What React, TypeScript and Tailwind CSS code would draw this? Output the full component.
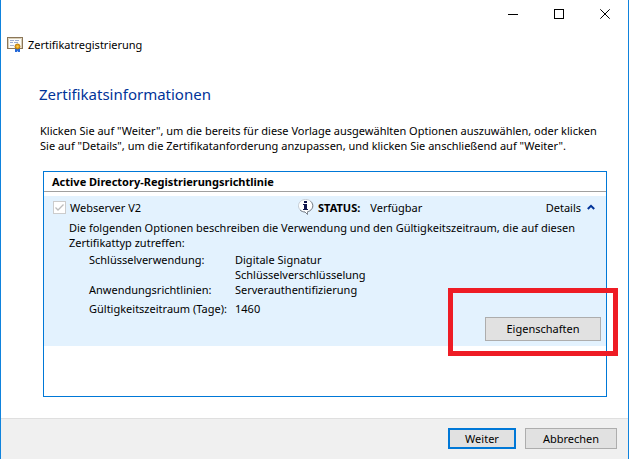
import { useState } from "react";
import type { ReactNode } from "react";

interface TemplateOption {
  label: string;
  values: string[];
}

const templateOptions: TemplateOption[] = [
  {
    label: "Schlüsselverwendung:",
    values: ["Digitale Signatur", "Schlüsselverschlüsselung"],
  },
  { label: "Anwendungsrichtlinien:", values: ["Serverauthentifizierung"] },
  { label: "Gültigkeitszeitraum (Tage):", values: ["1460"] },
];

function CertificateIcon() {
  return (
    <svg width="16" height="16" viewBox="0 0 16 16" aria-hidden="true">
      <rect x="0.5" y="1.5" width="15" height="11" fill="#fdfcf8" stroke="#8b7658" />
      <path d="M1.5 12V2.5H14.5V12" fill="none" stroke="#d9cfb8" />
      <path d="M3 4.5H7M8 4.5H12M3 6.5H6M7 6.5H11" stroke="#9dabcf" />
      <path d="M3 9.5H7" stroke="#a9b5d2" />
      <path d="M8 11.5V16H10L10.5 14.5L11 16H13V11.5Z" fill="#2468d8" />
      <circle cx="10.5" cy="10.5" r="2.5" fill="#e6a117" stroke="#b97909" />
      <circle cx="10.5" cy="10.5" r="1" fill="#f7cf56" />
    </svg>
  );
}

function InfoIcon() {
  return (
    <svg width="16" height="16" viewBox="0 0 16 16" aria-hidden="true">
      <path
        d="M7.5 0.5C3.6 0.5 0.5 3.2 0.5 6.8C0.5 10.2 3.4 12.8 7 13L9.5 15.5V12.8C13.4 11.8 15 9.5 15 6.8C15 3.2 11.7 0.5 7.5 0.5Z"
        fill="#fff"
        stroke="#c3cbd3"
      />
      <path
        d="M12.5 2.3C16.2 5.2 15.4 11.2 9.5 12.8V15.5L7 13C5 13 3.2 12.2 2 11"
        fill="none"
        stroke="#7d858e"
      />
      <rect x="6" y="2" width="3" height="2" fill="#11174d" />
      <path d="M5 5H9V10H10V11H5V10H6V6H5Z" fill="#11174d" />
    </svg>
  );
}

// 标题栏按钮
function CaptionButton({ label, children }: { label: string; children: ReactNode }) {
  return (
    <button
      type="button"
      aria-label={label}
      className="flex h-7 w-[46px] items-center justify-center hover:bg-[#e5e5e5]"
    >
      <svg width="10" height="10" viewBox="0 0 10 10" fill="none" stroke="#000" aria-hidden="true">
        {children}
      </svg>
    </button>
  );
}

export default function App() {
  const [expanded, setExpanded] = useState(true);

  return (
    <div className="flex h-screen bg-white pr-px font-['Noto_Sans',sans-serif] text-[11px] leading-[15px] text-black">
      <div className="flex min-w-0 flex-1 flex-col border-x border-[#0f83dd]">
        {/* 标题栏 */}
        <div className="flex justify-end">
          <CaptionButton label="Minimieren">
            <path d="M0 5.5H10" />
          </CaptionButton>
          <CaptionButton label="Maximieren">
            <rect x="0.5" y="0.5" width="9" height="9" />
          </CaptionButton>
          <CaptionButton label="Schließen">
            <path d="M0.3 0.3L9.7 9.7M9.7 0.3L0.3 9.7" />
          </CaptionButton>
        </div>

        <header className="flex h-8 items-center gap-[5px] px-1.5">
          <CertificateIcon />
          <span>Zertifikatregistrierung</span>
        </header>

        <main className="flex flex-1 flex-col pt-[23px] pr-[21px] pb-[21px] pl-[42px]">
          <h1 className="-ml-1 text-[15px] leading-[22px] text-[#003399]">
            Zertifikatsinformationen
          </h1>
          <p className="-ml-[3px] mt-[18px] whitespace-nowrap">
            Klicken Sie auf "Weiter", um die bereits für diese Vorlage ausgewählten Optionen auszuwählen, oder klicken
            <br />
            Sie auf "Details", um die Zertifikatanforderung anzupassen, und klicken Sie anschließend auf "Weiter".
          </p>

          <section className="mt-[18px] flex-1 border border-[#0078d7]">
            <h2 className="border-b border-[#a0a0a0] px-2 py-0.5 font-bold">
              Active Directory-Registrierungsrichtlinie
            </h2>

            <div className="mt-1 bg-[#e3f2fe] pr-[5px] pb-[5px] pl-[9px]">
              <div className="flex h-6 items-center pb-0.5">
                <label className="flex w-[245px] items-center gap-1">
                  <input type="checkbox" checked disabled className="peer sr-only" />
                  <svg width="13" height="13" viewBox="0 0 13 13" fill="none" aria-hidden="true">
                    <rect x="0.5" y="0.5" width="12" height="12" fill="#fff" stroke="#ccc" />
                    <path d="M2.5 6.5L5 9L10.5 3.5" stroke="#bcbcbc" strokeWidth="1.3" />
                  </svg>
                  Webserver V2
                </label>
                <InfoIcon />
                <strong className="ml-1">STATUS:</strong>
                <span className="ml-2.5">Verfügbar</span>
                <button
                  type="button"
                  aria-expanded={expanded}
                  onClick={() => setExpanded(!expanded)}
                  className="mr-1.5 ml-auto flex items-center gap-1.5"
                >
                  Details
                  <svg
                    width="8"
                    height="6"
                    viewBox="0 0 8 6"
                    fill="none"
                    aria-hidden="true"
                    className={expanded ? "" : "rotate-180"}
                  >
                    <path d="M0.8 5L4 1.8L7.2 5" stroke="#003399" strokeWidth="2" />
                  </svg>
                </button>
              </div>

              {expanded && (
                <>
                  <p className="pl-4">
                    Die folgenden Optionen beschreiben die Verwendung und den Gültigkeitszeitraum, die auf diesen
                    Zertifikattyp zutreffen:
                  </p>
                  <dl className="mt-0.5 grid grid-cols-[146px_1fr] pl-9">
                    {templateOptions.map((option) => (
                      <div key={option.label} className="col-span-2 grid grid-cols-subgrid last:mt-1">
                        <dt className="whitespace-nowrap">{option.label}</dt>
                        <dd>
                          {option.values.map((value) => (
                            <div key={value}>{value}</div>
                          ))}
                        </dd>
                      </div>
                    ))}
                  </dl>
                  <div className="mt-px flex justify-end">
                    <div className="relative">
                      <button
                        type="button"
                        className="h-6 w-29 border border-[#adadad] bg-[#e1e1e1] pb-px hover:bg-[#e5f1fb]"
                      >
                        Eigenschaften
                      </button>
                      {/* 红色标注框 */}
                      <div className="pointer-events-none absolute -top-[29px] -right-[17px] -bottom-[15px] -left-[37px] border-5 border-[#ee1c25]" />
                    </div>
                  </div>
                </>
              )}
            </div>
          </section>
        </main>

        <footer className="flex justify-end gap-[9px] border-t border-[#dfdfdf] bg-[#f0f0f0] pt-[9px] pr-[11px] pb-[10px]">
          <button type="button" className="h-[21px] w-17 border-2 border-[#0078d7] bg-[#e1e1e1] pb-px">
            Weiter
          </button>
          <button type="button" className="h-[21px] w-23 border border-[#adadad] bg-[#e1e1e1] pb-px">
            Abbrechen
          </button>
        </footer>
      </div>
    </div>
  );
}
